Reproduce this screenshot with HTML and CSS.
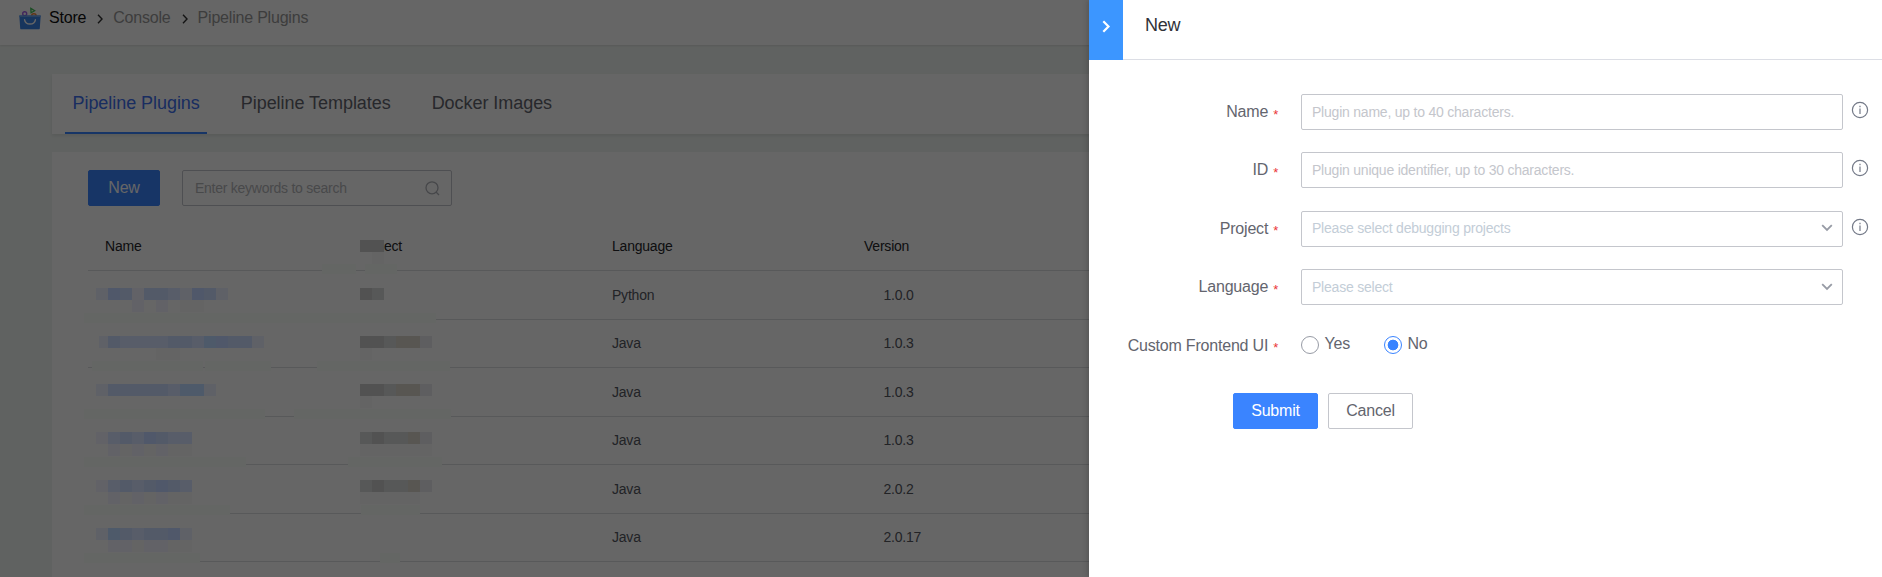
FILE: index.html
```html
<!DOCTYPE html>
<html lang="en">
<head>
<meta charset="utf-8">
<title>Store - Pipeline Plugins</title>
<link rel="stylesheet" href="styles.css">
</head>
<body>
<div class="page">
  <header class="topbar">
    <svg class="logo" width="22" height="23" viewBox="0 0 22 23">
      <circle cx="5.7" cy="6.8" r="2" fill="none" stroke="#a25fe8" stroke-width="1.4"/>
      <path d="M11.8 1.400l3.800 2.400-3.500 1.900z" fill="none" stroke="#44c05a" stroke-width="1.3"/>
      <path d="M12.400 8.600a2.600 2.600 0 0 1 5 0" fill="none" stroke="#f08030" stroke-width="1.500"/>
      <path d="M.3 8.500h21.400l-.9 12.800c0 .6-.5 1-1 1H2.200c-.6 0-1-.4-1-1z" fill="#3a84e8"/>
      <path d="M.3 8.500h21.400l-.2 1.500H.5z" fill="#68a4f0"/>
      <path d="M5.600 12.800c1 5.600 9.800 5.600 10.800 0" fill="none" stroke="#fff" stroke-width="1.400" stroke-linecap="round"/>
    </svg>
    <nav class="crumbs">
      <span class="crumb current">Store</span>
      <svg class="sep" width="6" height="10" viewBox="0 0 6 10"><path d="M1 .8L5 5 1 9.200"/></svg>
      <span class="crumb">Console</span>
      <svg class="sep" width="6" height="10" viewBox="0 0 6 10"><path d="M1 .8L5 5 1 9.200"/></svg>
      <span class="crumb">Pipeline Plugins</span>
    </nav>
  </header>
  <nav class="tabs">
    <a class="tab active">Pipeline Plugins</a>
    <a class="tab">Pipeline Templates</a>
    <a class="tab">Docker Images</a>
  </nav>
  <main class="panel">
    <div class="toolbar">
      <button class="btn primary new">New</button>
      <div class="search"><span>Enter keywords to search</span>
        <svg width="15" height="15" viewBox="0 0 15 15" fill="none" stroke="#b0b2b8" stroke-width="1.300"><circle cx="7" cy="6.800" r="6"/><path d="M11 11l3 3"/></svg>
      </div>
    </div>
    <div class="table">
      <div class="row head"><span>Name</span><span>Project</span><span>Language</span><span>Version</span></div>
      <div class="row"><span></span><span></span><span>Python</span><span class="ver">1.0.0</span></div>
      <div class="row"><span></span><span></span><span>Java</span><span class="ver">1.0.3</span></div>
      <div class="row"><span></span><span></span><span>Java</span><span class="ver">1.0.3</span></div>
      <div class="row"><span></span><span></span><span>Java</span><span class="ver">1.0.3</span></div>
      <div class="row"><span></span><span></span><span>Java</span><span class="ver">2.0.2</span></div>
      <div class="row"><span></span><span></span><span>Java</span><span class="ver">2.0.17</span></div>
    </div>
  </main>
</div>
<div class="mask"></div>
<svg class="mosaic" id="mosaic" width="470" height="577" viewBox="0 0 470 577" shape-rendering="crispEdges"></svg>

<aside class="drawer">
  <div class="drawer-head">
    <button class="collapse"><svg width="9" height="13" viewBox="0 0 9 13"><path d="M1.300 1.300l5.200 5.200-5.200 5.200" fill="none" stroke="#fff" stroke-width="2.200"/></svg></button>
    <h1>New</h1>
  </div>
  <form class="form">
    <div class="field"><label>Name<i>*</i></label><div class="input">Plugin name, up to 40 characters.</div><svg class="info" width="18" height="18" viewBox="0 0 18 18"><circle cx="9" cy="9" r="7.600"/><path d="M9 7.500v5.500M9 4.800v1.500"/></svg></div>
    <div class="field"><label>ID<i>*</i></label><div class="input">Plugin unique identifier, up to 30 characters.</div><svg class="info" width="18" height="18" viewBox="0 0 18 18"><circle cx="9" cy="9" r="7.600"/><path d="M9 7.500v5.500M9 4.800v1.500"/></svg></div>
    <div class="field"><label>Project<i>*</i></label><div class="input select">Please select debugging projects<svg width="12" height="8" viewBox="0 0 12 8"><path d="M1.200 1.200L6 6l4.800-4.800"/></svg></div><svg class="info" width="18" height="18" viewBox="0 0 18 18"><circle cx="9" cy="9" r="7.600"/><path d="M9 7.500v5.500M9 4.800v1.500"/></svg></div>
    <div class="field"><label>Language<i>*</i></label><div class="input select">Please select<svg width="12" height="8" viewBox="0 0 12 8"><path d="M1.200 1.200L6 6l4.800-4.800"/></svg></div></div>
    <div class="field"><label>Custom Frontend UI<i>*</i></label>
      <div class="radios"><span class="radio"></span><span class="rtext yes">Yes</span><span class="radio on"></span><span class="rtext">No</span></div>
    </div>
    <div class="actions"><button type="button" class="btn primary">Submit</button><button type="button" class="btn">Cancel</button></div>
  </form>
</aside>
<script src="mosaic.js"></script>
</body>
</html>
```
FILE: styles.css
```css
* { box-sizing: border-box; }
body {
  margin: 0;
  width: 1882px;
  height: 577px;
  overflow: hidden;
  position: relative;
  font-family: "Liberation Sans", Arial, sans-serif;
  font-size: 16px;
  letter-spacing: -.2px;
  color: #63656e;
}
.page { height: 577px; background: #f0f5f2; display: flex; flex-direction: column; overflow: hidden; }
.topbar {
  flex: none; height: 45px; padding: 0 0 9px 19px; background: #fff;
  display: flex; align-items: center;
  box-shadow: 0 1px 2px rgba(0,0,0,.1);
}
.logo { flex: none; margin-right: 8px; }
.crumbs { display: flex; align-items: center; color: #999; }
.current { color: #111; }
.sep { margin: 2px 10px 0 11px; fill: none; stroke: #333; stroke-width: 1.4; }
.tabs {
  flex: none; height: 60px; margin: 29px 0 18px 52px; padding-left: 13px; background: #fff;
  display: flex; gap: 26px; font-size: 18px; letter-spacing: -.05px; color: #63656e;
  box-shadow: 0 2px 3px rgba(0,0,0,.08);
}
.tab { height: 60px; padding: 0 7.500px; line-height: 58px; white-space: nowrap; }
.tab.active { color: #4070f0; border-bottom: 2px solid #3a84ff; }
.panel { flex: 1; margin-left: 52px; padding: 18px 0 0 36px; background: #fff; }
.toolbar { display: flex; gap: 22px; height: 36px; }
.btn {
  height: 36px; width: 85px; padding: 0 0 1px; border: 1px solid #c4c6cc; border-radius: 2px;
  background: #fff; color: #63656e; font: 16px "Liberation Sans", Arial, sans-serif; letter-spacing: -.2px;
}
.btn.primary { background: #3a84ff; border-color: #3a84ff; color: #fff; }
.btn.new { width: 72px; }
.search {
  width: 270px; border: 1px solid #c4c6cc; border-radius: 2px; padding: 0 11px 0 12px;
  display: flex; align-items: center; justify-content: space-between;
  font-size: 14px; letter-spacing: -.26px; color: #b5b6ba;
}
.table { margin-top: 16px; font-size: 14px; letter-spacing: -.22px; color: #55575f; }
.row {
  display: grid; grid-template-columns: 255px 252px 252px 1fr; height: 48.500px;
  padding-left: 17px; align-items: center; border-bottom: 1px solid #dcdee0;
}
.row.head { color: #26272b; height: 49px; }
.ver { padding-left: 19.500px; }
.mask { position: absolute; inset: 0; background: rgba(0,0,0,.6); }
.mosaic { position: absolute; left: 0; top: 0; }
.drawer {
  position: absolute; top: 0; right: 0; width: 793px; height: 577px; background: #fff;
  box-shadow: -2px 0 5px rgba(0,0,0,.15);
}
.drawer-head { display: flex; height: 60px; border-bottom: 1px solid #dcdee5; }
.collapse {
  width: 34px; height: 60px; padding: 0 0 8px; border: 0; background: #3c96ff;
  display: flex; align-items: center; justify-content: center;
}
h1 { margin: 0 0 0 22px; font-size: 18px; font-weight: 400; line-height: 50px; color: #313238; }
.form { padding-top: 34px; }
.field { display: flex; height: 36px; margin-bottom: 22.400px; }
.field label { width: 189px; margin-right: 23px; text-align: right; line-height: 35px; white-space: nowrap; }
.field i { display: inline-block; margin-left: 5px; font-style: normal; font-size: 13px; line-height: 10px; color: #ea3636; vertical-align: -1.500px; }
.input {
  width: 542px; border: 1px solid #c4c6cc; border-radius: 2px; padding: 0 10px 1px;
  display: flex; align-items: center; justify-content: space-between;
  font-size: 14px; letter-spacing: -.22px; color: #c4c6cc;
}
.select { color: #c3cdd7; }
.select svg { fill: none; stroke: #979ba5; stroke-width: 1.8; margin-right: -1px; }
.info { margin: 7px 0 0 8px; fill: none; stroke: #737987; stroke-width: 1.2; }
.radios { display: flex; align-items: center; padding-bottom: 2px; }
.radio { width: 18px; height: 18px; border: 1px solid #979ba5; border-radius: 50%; }
.radio.on { border-color: #3a84ff; background: radial-gradient(circle, #3a84ff 5px, #fff 5.700px); }
.rtext { margin: -1px 0 0 5.500px; }
.yes { width: 59.500px; }
.actions { display: flex; gap: 10px; padding-left: 144px; margin-top: 29.500px; }
```
FILE: mosaic.js
```js
// Redaction mosaic over the private columns: 12px cells, one entry per cell.
const svg = document.getElementById('mosaic');
const palette = {
  a: '#535a68', b: '#50586a', c: '#585d69', d: '#5f6167', e: '#626267',
  k: '#525252', l: '#575858', m: '#585652', n: '#5e5e60', s: '#4e5a6a', f: '#646464',
};
function rect(x, y, w, h, fill) {
  const r = document.createElementNS('http://www.w3.org/2000/svg', 'rect');
  Object.entries({ x, y, width: w, height: h, fill }).forEach(([k, v]) => r.setAttribute(k, v));
  svg.appendChild(r);
}
const smudges = [
  [322, 264, 34], [365, 264, 32], [84, 313, 352], [92, 361, 111], [205, 361, 66], [317, 361, 133],
  [84, 409, 181], [294, 409, 157], [84, 457, 162], [348, 457, 94], [84, 505, 146], [361, 505, 59],
  [84, 553, 116], [380, 553, 20],
];
smudges.forEach(([x, y, w]) => rect(x, y, w, 10, '#646664'));
rect(99, 336, 9, 12, palette.d);
const cells = [
  [96, 288, 'dbaeaacdbad'], [132, 300, 'e.e.ff'],
  [108, 336, 'accccaacsbaad'], [156, 348, 'ff'],
  [96, 384, 'daaaaacssd'],
  [96, 432, 'ecacbacc'], [108, 444, 'efefeff'],
  [96, 480, 'ecacabac'], [108, 492, 'efefeff'],
  [96, 528, 'dsacaabd'], [108, 540, 'eefeeff'],
  [360, 240, 'kk'], [372, 252, 'f'], [360, 288, 'kl'],
  [360, 336, 'kklmmn'], [360, 348, 'f'], [360, 384, 'kklmmn'], [360, 396, 'f'],
  [360, 432, 'lkllmn'], [360, 444, 'ffffff'],
  [360, 480, 'lkllmn'], [360, 492, 'fffff'],
];
cells.forEach(([x, y, row]) => [...row].forEach((c, i) => {
  if (palette[c]) rect(x + i * 12, y, 12, 12, palette[c]);
}));
```
